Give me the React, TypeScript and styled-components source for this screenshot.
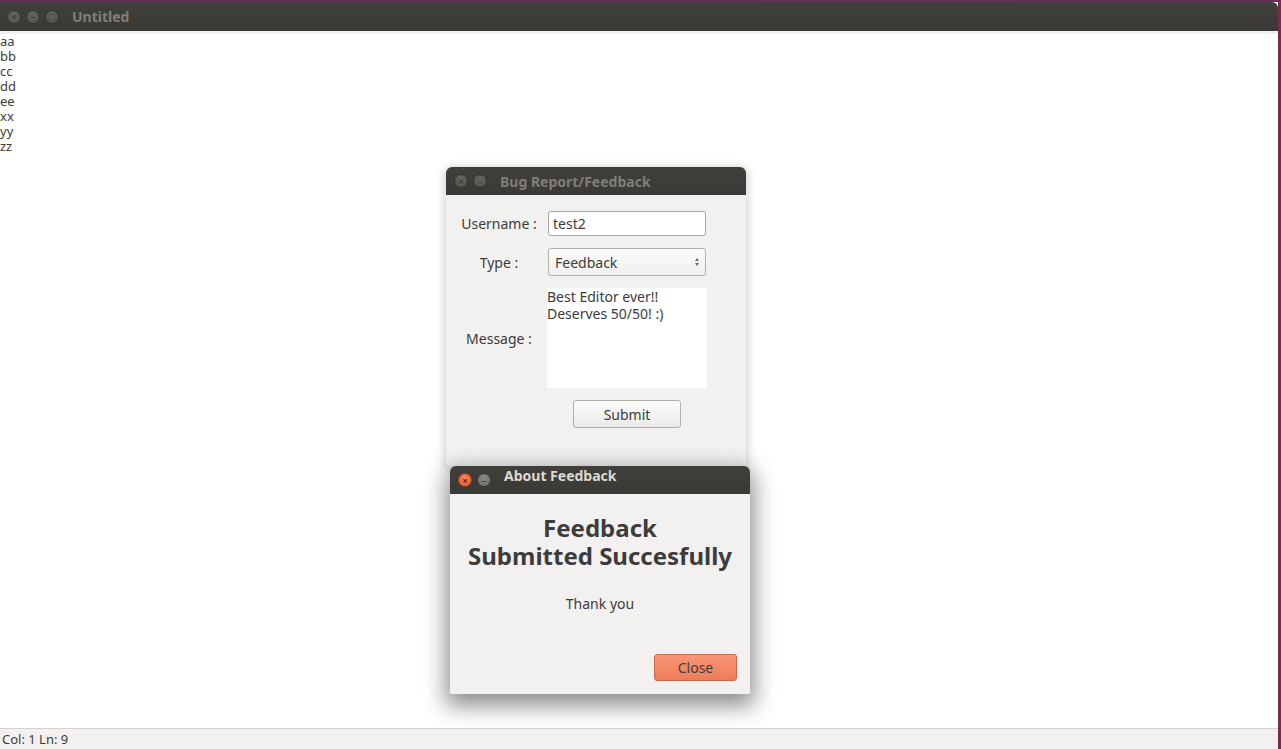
import React from "react";
import styled, { createGlobalStyle, css } from "styled-components";

const Global = createGlobalStyle`
  html, body { margin: 0; padding: 0; width: 1281px; height: 749px; overflow: hidden; }
  body { font-family: "Noto Sans", "Open Sans", sans-serif; background: #ffffff; }
  #root { width: 100%; height: 100%; }
`;

const MainWindow = styled.div`
  position: relative;
  width: 1281px;
  height: 749px;
  box-sizing: border-box;
  display: flex;
  flex-direction: column;
  border-top: 2px solid #6a2c5c;
  border-right: 3px solid #7a2a4c;
  background: #ffffff;
`;

const TitleBar = styled.div`
  height: 29px;
  flex: none;
  display: flex;
  align-items: center;
  gap: 5px;
  padding-left: 7px;
  background: linear-gradient(#403f3b, #3a3935);
  border-radius: 0 6px 0 0;
`;

const WinBtn = styled.span<{ $kind: "close" | "min" | "max"; $active?: boolean }>`
  width: 14px;
  height: 14px;
  flex: none;
  border-radius: 50%;
  box-sizing: border-box;
  display: inline-flex;
  align-items: center;
  justify-content: center;
  background: radial-gradient(circle at 50% 35%, #65645e, #53524d);
  border: 1px solid #34332f;
  color: #3a3935;
  font-size: 9px;
  font-weight: bold;
  line-height: 1;
  ${(p) =>
    p.$active && p.$kind === "close" &&
    css`
      background: radial-gradient(circle at 50% 35%, #f7835a, #e45a2b);
      border-color: #9f3a1b;
      color: #5a1e0c;
    `}
  ${(p) =>
    p.$active && p.$kind !== "close" &&
    css`
      background: radial-gradient(circle at 50% 35%, #8a8983, #6c6b66);
      border-color: #3b3a36;
      color: #3a3935;
    `}
`;

const TitleText = styled.span<{ $active?: boolean }>`
  margin-left: 8px;
  font-weight: bold;
  font-size: 14px;
  color: ${(p) => (p.$active ? "#dfdbd2" : "#807e78")};
  white-space: nowrap;
  ${(p) => p.$active && "margin-bottom: 10px;"}
`;

const Strip = styled.div`
  height: 3px;
  flex: none;
  background: #f1f0ee;
`;

const Editor = styled.div`
  flex: 1;
  font-size: 13px;
  line-height: 15px;
  color: #3c3c3c;
  white-space: pre;
`;

const StatusBar = styled.div`
  height: 20px;
  flex: none;
  border-top: 1px solid #d6d3ce;
  background: #f2f1f0;
  font-size: 13px;
  color: #3c3c3c;
  display: flex;
  align-items: center;
  padding-left: 2px;
`;

const Dialog = styled.div<{ $x: number; $y: number; $z: number; $strong?: boolean }>`
  position: absolute;
  left: ${(p) => p.$x}px;
  top: ${(p) => p.$y}px;
  width: 300px;
  z-index: ${(p) => p.$z};
  display: flex;
  flex-direction: column;
  border-radius: 6px 6px 0 0;
  box-shadow: ${(p) =>
    p.$strong
      ? "0 8px 22px 4px rgba(0,0,0,0.45)"
      : "0 2px 10px 2px rgba(0,0,0,0.18)"};
`;

const DialogTitle = styled(TitleBar)`
  height: 28px;
  padding-left: 8px;
  gap: 5px;
  border-radius: 6px 6px 0 0;
`;

const FormBody = styled.div`
  height: 271px;
  background: #f2f1f0;
  box-sizing: border-box;
  padding: 16px 0 0 15px;
  display: grid;
  grid-template-columns: 76px 160px;
  column-gap: 10px;
  row-gap: 12px;
  align-content: start;
  align-items: center;
`;

const Label = styled.span`
  font-size: 14px;
  color: #3c3c3c;
  text-align: center;
  white-space: nowrap;
`;

const Field = styled.div`
  height: 25px;
  width: 158px;
  margin-left: 1px;
  box-sizing: border-box;
  border: 1px solid #a9a59f;
  border-radius: 3px;
  background: #ffffff;
  font-size: 14px;
  color: #3c3c3c;
  display: flex;
  align-items: center;
  padding-left: 4px;
`;

const Combo = styled(Field)`
  height: 28px;
  padding-left: 6px;
  justify-content: space-between;
  padding-right: 6px;
  border-color: #b3afa9;
  background: linear-gradient(#fbfbfa, #f1f0ef);
`;

const Spin = styled.span`
  display: flex;
  flex-direction: column;
  align-items: center;
  gap: 2px;
`;

const Arrow = styled.span<{ $down?: boolean }>`
  width: 0;
  height: 0;
  border-left: 2.5px solid transparent;
  border-right: 2.5px solid transparent;
  ${(p) =>
    p.$down
      ? "border-top: 3px solid #6b6a66;"
      : "border-bottom: 3px solid #6b6a66;"}
`;

const TextArea = styled.div`
  height: 100px;
  width: 160px;
  background: #ffffff;
  font-size: 14px;
  line-height: 17px;
  color: #3c3c3c;
  padding-top: 0;
  box-sizing: border-box;
  white-space: pre;
`;

const PushButton = styled.div`
  justify-self: center;
  width: 108px;
  height: 28px;
  box-sizing: border-box;
  border: 1px solid #b3afa9;
  border-radius: 3px;
  background: linear-gradient(#fbfbfa, #eceae8);
  font-size: 14px;
  color: #3c3c3c;
  display: flex;
  align-items: center;
  justify-content: center;
`;

const AboutBody = styled.div`
  height: 200px;
  background: #f2f1f0;
  box-sizing: border-box;
  padding: 20px 13px 13px;
  display: flex;
  flex-direction: column;
  align-items: center;
`;

const Heading = styled.div`
  font-size: 24px;
  line-height: 28px;
  font-weight: bold;
  color: #3c3c3c;
  text-align: center;
`;

const Note = styled.div`
  margin-top: 24px;
  font-size: 14px;
  line-height: 20px;
  color: #3c3c3c;
`;

const Spacer = styled.div`
  flex: 1;
`;

const OrangeButton = styled.div`
  align-self: flex-end;
  width: 83px;
  height: 27px;
  box-sizing: border-box;
  border: 1px solid #c8694a;
  border-radius: 3px;
  background: linear-gradient(#f9967a, #ee7c58);
  font-size: 14px;
  color: #4a3b35;
  display: flex;
  align-items: center;
  justify-content: center;
`;

export default function App() {
  return (
    <>
      <Global />
      <MainWindow>
        <TitleBar>
          <WinBtn $kind="close">×</WinBtn>
          <WinBtn $kind="min">–</WinBtn>
          <WinBtn $kind="max">□</WinBtn>
          <TitleText>Untitled</TitleText>
        </TitleBar>
        <Strip />
        <Editor>{"aa\nbb\ncc\ndd\nee\nxx\nyy\nzz"}</Editor>
        <StatusBar>Col: 1 Ln: 9</StatusBar>

        <Dialog $x={446} $y={165} $z={1}>
          <DialogTitle>
            <WinBtn $kind="close">×</WinBtn>
            <WinBtn $kind="min">–</WinBtn>
            <TitleText>Bug Report/Feedback</TitleText>
          </DialogTitle>
          <FormBody>
            <Label>Username :</Label>
            <Field>test2</Field>
            <Label>Type :</Label>
            <Combo>
              Feedback
              <Spin>
                <Arrow />
                <Arrow $down />
              </Spin>
            </Combo>
            <Label>Message :</Label>
            <TextArea>{"Best Editor ever!!\nDeserves 50/50! :)"}</TextArea>
            <span />
            <PushButton>Submit</PushButton>
          </FormBody>
        </Dialog>

        <Dialog $x={450} $y={464} $z={2} $strong>
          <DialogTitle>
            <WinBtn $kind="close" $active>×</WinBtn>
            <WinBtn $kind="min" $active>–</WinBtn>
            <TitleText $active>About Feedback</TitleText>
          </DialogTitle>
          <AboutBody>
            <Heading>
              Feedback
              <br />
              Submitted Succesfully
            </Heading>
            <Note>Thank you</Note>
            <Spacer />
            <OrangeButton>Close</OrangeButton>
          </AboutBody>
        </Dialog>
      </MainWindow>
    </>
  );
}
